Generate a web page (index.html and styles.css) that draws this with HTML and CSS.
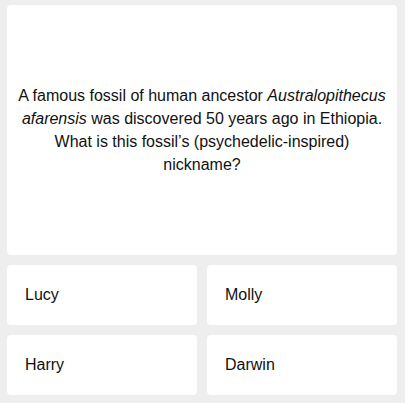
FILE: index.html
```html
<!DOCTYPE html>
<html lang="en">
<head>
    <meta charset="UTF-8">
    <meta name="viewport" content="width=device-width, initial-scale=1.0">
    <title>Fossil Quiz</title>
    <link rel="stylesheet" href="styles.css">
</head>
<body>
    <div class="quiz">
        <div class="question">
            <p>A famous fossil of human ancestor <em>Australopithecus afarensis</em> was discovered 50 years ago in Ethiopia. What is this fossil’s (psychedelic-inspired) nickname?</p>
        </div>
        <div class="answers">
            <button class="answer">Lucy</button>
            <button class="answer">Molly</button>
            <button class="answer">Harry</button>
            <button class="answer">Darwin</button>
        </div>
    </div>
</body>
</html>
```

FILE: styles.css
```css
body {
    margin: 0;
    background-color: #eeeeee;
    font-family: "Liberation Sans", Arial, sans-serif;
    color: #111;
}

.quiz {
    padding: 5px 8px 8px 7px;
    display: flex;
    flex-direction: column;
    gap: 10px;
}

.question {
    height: 250px;
    background-color: #fff;
    border-radius: 4px;
    display: flex;
    align-items: center;
    justify-content: center;
    padding: 0 8px;
    box-sizing: border-box;
}

.question p {
    margin: 0;
    text-align: center;
    font-size: 16px;
    line-height: 23px;
}

.answers {
    display: grid;
    grid-template-columns: 1fr 1fr;
    gap: 10px;
}

.answer {
    height: 60px;
    border: none;
    border-radius: 4px;
    background-color: #fff;
    text-align: left;
    padding: 0 18px;
    font-family: inherit;
    font-size: 16px;
    color: #111;
}
```
